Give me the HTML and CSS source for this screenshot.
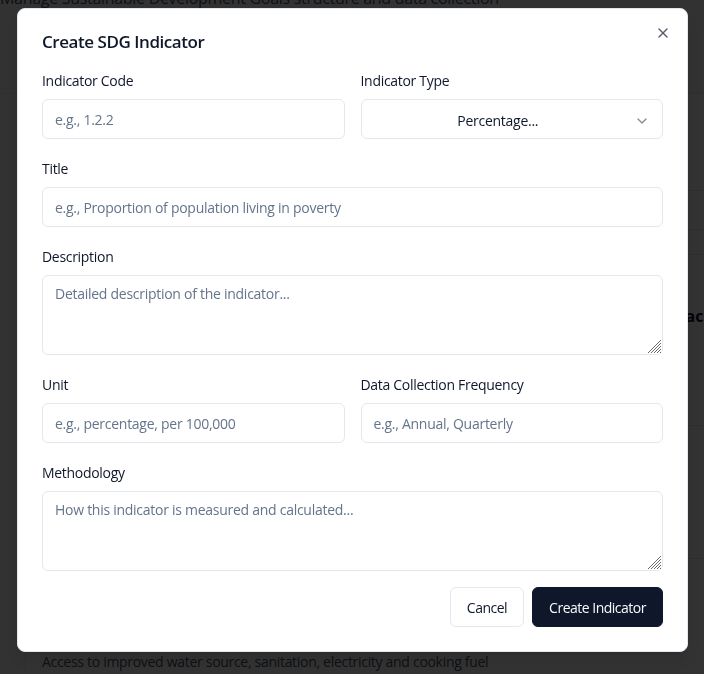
FILE: index.html
```html
<!DOCTYPE html>
<html lang="en">
<head>
<meta charset="utf-8">
<title>Create SDG Indicator</title>
<link rel="stylesheet" href="styles.css">
</head>
<body>
<div class="page">
  <header class="page-header">
    <p class="page-desc">Manage Sustainable Development Goals structure and data collection</p>
  </header>
  <section class="goals-card">
    <div class="row row-a"></div>
    <div class="row row-b"></div>
    <div class="row row-c"></div>
    <div class="row row-d"><span class="row-spacer"></span><strong class="row-title">Peace, justice and strong institutions</strong></div>
    <div class="row row-e"></div>
    <div class="row row-f"><p class="row-text">Access to improved water source, sanitation, electricity and cooking fuel</p></div>
  </section>
</div>

<div class="overlay"></div>

<div class="dialog" role="dialog" aria-labelledby="dlg-title">
  <button class="dialog-close" type="button" aria-label="Close">
    <svg viewBox="0 0 24 24" width="16" height="16" fill="none" stroke="currentColor" stroke-width="2" stroke-linecap="round" stroke-linejoin="round"><path d="M18 6 6 18"/><path d="m6 6 12 12"/></svg>
  </button>
  <h2 class="dialog-title" id="dlg-title">Create SDG Indicator</h2>
  <form class="form">
    <div class="two-col">
      <div class="field">
        <label class="label" for="code">Indicator Code</label>
        <input class="input" id="code" type="text" placeholder="e.g., 1.2.2">
      </div>
      <div class="field">
        <label class="label">Indicator Type</label>
        <button class="select" type="button">
          <span class="select-value">Percentage...</span>
          <svg class="chevron" viewBox="0 0 24 24" width="16" height="16" fill="none" stroke="currentColor" stroke-width="2" stroke-linecap="round" stroke-linejoin="round"><path d="m6 9 6 6 6-6"/></svg>
        </button>
      </div>
    </div>
    <div class="field">
      <label class="label" for="title">Title</label>
      <input class="input" id="title" type="text" placeholder="e.g., Proportion of population living in poverty">
    </div>
    <div class="field">
      <label class="label" for="desc">Description</label>
      <div class="textarea-wrap">
        <textarea class="textarea" id="desc" placeholder="Detailed description of the indicator..."></textarea>
        <svg class="grip" viewBox="0 0 14 14" width="14" height="14" fill="none" stroke="#6b6b6b" stroke-width="1"><path d="M14 1 1 14M14 4 4 14M14 7 7 14M14 10 10 14M14 13 13 14"/></svg>
      </div>
    </div>
    <div class="two-col">
      <div class="field">
        <label class="label" for="unit">Unit</label>
        <input class="input" id="unit" type="text" placeholder="e.g., percentage, per 100,000">
      </div>
      <div class="field">
        <label class="label" for="freq">Data Collection Frequency</label>
        <input class="input" id="freq" type="text" placeholder="e.g., Annual, Quarterly">
      </div>
    </div>
    <div class="field">
      <label class="label" for="method">Methodology</label>
      <div class="textarea-wrap">
        <textarea class="textarea" id="method" placeholder="How this indicator is measured and calculated..."></textarea>
        <svg class="grip" viewBox="0 0 14 14" width="14" height="14" fill="none" stroke="#6b6b6b" stroke-width="1"><path d="M14 1 1 14M14 4 4 14M14 7 7 14M14 10 10 14M14 13 13 14"/></svg>
      </div>
    </div>
    <div class="actions">
      <button class="btn btn-outline" type="button">Cancel</button>
      <button class="btn btn-primary" type="button">Create Indicator</button>
    </div>
  </form>
</div>
</body>
</html>
```
FILE: styles.css
```css
* { box-sizing: border-box; }

html, body {
  margin: 0;
  padding: 0;
  width: 704px;
  height: 674px;
  overflow: hidden;
}

body {
  font-family: "Open Sans", "Noto Sans", sans-serif;
  color: #0f172a;
  background: #f8fafc;
}

/* ---------- background page ---------- */
.page {
  width: 760px;
}

.page-header {
  height: 94px;
  border-bottom: 1px solid #e2e8f0;
}

.page-desc {
  margin: 0;
  transform: translateY(-14px);
  font-size: 16px;
  line-height: 24px;
  letter-spacing: -0.3px;
  color: #475569;
  white-space: nowrap;
}

.goals-card {
  margin-left: 25px;
  background: #ffffff;
  border-left: 1px solid #e2e8f0;
}

.row {
  border-bottom: 1px solid #e2e8f0;
  display: flex;
  align-items: center;
}

.row-a { height: 97px; }
.row-b { height: 39px; }
.row-c { height: 25px; }
.row-d { height: 171px; }
.row-e { height: 133px; }
.row-f { height: 120px; align-items: flex-end; padding-bottom: 6px; }

.row-spacer { width: 640px; flex: none; }

.row-title {
  font-size: 16px;
  font-weight: 700;
  white-space: nowrap;
  margin-top: -48px;
}

.row-text {
  margin: 0 0 0 16px;
  font-size: 14px;
  line-height: 20px;
  letter-spacing: -0.3px;
  color: #475569;
  white-space: nowrap;
}

/* ---------- overlay + dialog ---------- */
.overlay {
  position: fixed;
  inset: 0;
  background: rgba(0, 0, 0, 0.8);
}

.dialog {
  position: absolute;
  left: 17px;
  top: 8px;
  width: 671px;
  background: #ffffff;
  border: 1px solid #e2e8f0;
  border-radius: 8px;
  padding: 24px;
  box-shadow: 0 10px 15px -3px rgba(0,0,0,0.1), 0 4px 6px -4px rgba(0,0,0,0.1);
}

.dialog-close {
  position: absolute;
  right: 16px;
  top: 16px;
  width: 16px;
  height: 16px;
  padding: 0;
  border: 0;
  background: transparent;
  color: #0f172a;
  opacity: 0.7;
  display: flex;
}

.dialog-title {
  margin: 0 0 20px;
  font-size: 17px;
  line-height: 18px;
  font-weight: 600;
  letter-spacing: -0.45px;
}

.form {
  display: flex;
  flex-direction: column;
  gap: 20px;
}

.two-col {
  display: grid;
  grid-template-columns: 1fr 1fr;
  gap: 16px;
}

.field {
  display: flex;
  flex-direction: column;
  gap: 8px;
}

.label {
  font-size: 14px;
  line-height: 20px;
  font-weight: 500;
  letter-spacing: -0.3px;
  color: #0f172a;
}

.input,
.textarea,
.select {
  width: 100%;
  border: 1px solid #e2e8f0;
  border-radius: 6px;
  background: #ffffff;
  font-family: inherit;
  font-size: 14px;
  line-height: 20px;
  letter-spacing: -0.27px;
  color: #0f172a;
  padding: 8px 12px;
  margin: 0;
  outline: none;
}

.input { height: 40px; }

.textarea-wrap {
  position: relative;
}

.textarea {
  height: 80px;
  display: block;
  resize: none;
}

.grip {
  position: absolute;
  right: 2px;
  bottom: 2px;
  pointer-events: none;
}

.input::placeholder,
.textarea::placeholder {
  color: #64748b;
  opacity: 1;
}

.select {
  height: 40px;
  display: flex;
  align-items: center;
  gap: 12px;
  padding-top: 3px;
  padding-bottom: 0;
  cursor: pointer;
}

.select-value {
  flex: 1;
  text-align: center;
}

.chevron {
  flex: none;
  opacity: 0.5;
}

.actions {
  display: flex;
  justify-content: flex-end;
  gap: 8px;
  margin-top: -4px;
}

.btn {
  height: 40px;
  padding: 0 16px;
  border-radius: 6px;
  font-family: inherit;
  font-size: 14px;
  font-weight: 500;
  letter-spacing: -0.5px;
  cursor: pointer;
}

.btn-outline {
  background: #ffffff;
  border: 1px solid #e2e8f0;
  color: #0f172a;
}

.btn-primary {
  background: #0f172a;
  border: 1px solid #0f172a;
  color: #f8fafc;
}
```
